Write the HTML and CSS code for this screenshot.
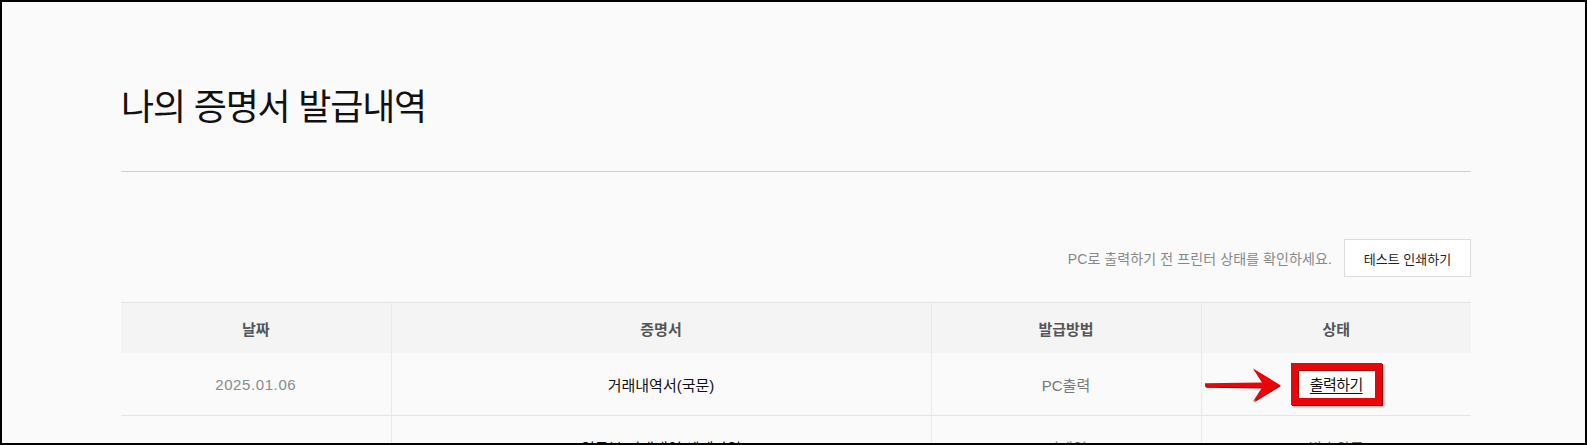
FILE: index.html
```html
<!DOCTYPE html>
<html lang="ko">
<head>
<meta charset="utf-8">
<title>나의 증명서 발급내역</title>
<link rel="stylesheet" href="styles.css">
</head>
<body>
<div class="frame">
  <div class="container">
    <h1 class="title">나의 증명서 발급내역</h1>
    <div class="toolbar">
      <p class="note">PC로 출력하기 전 프린터 상태를 확인하세요.</p>
      <button class="test-btn" type="button">테스트 인쇄하기</button>
    </div>
    <table class="history">
      <colgroup>
        <col class="c-date"><col class="c-cert"><col class="c-method"><col class="c-status">
      </colgroup>
      <thead>
        <tr><th>날짜</th><th>증명서</th><th>발급방법</th><th>상태</th></tr>
      </thead>
      <tbody>
        <tr>
          <td class="date">2025.01.06</td>
          <td class="cert">거래내역서(국문)</td>
          <td class="method">PC출력</td>
          <td class="status">
            <svg class="arrow" width="80" height="36" viewBox="0 0 80 36" aria-hidden="true">
              <path d="M2 16.2 L59 15.6 L50 1.5 L77 18 L50 34.5 L59 20.4 L2 19.8 Z" fill="#a80000" transform="translate(1,1)"/>
              <path d="M2 16.2 L59 15.6 L50 1.5 L77 18 L50 34.5 L59 20.4 L2 19.8 Z" fill="#e8060b"/>
            </svg>
            <a class="print-link" href="#">출력하기</a>
          </td>
        </tr>
        <tr>
          <td class="date">2025.01.03</td>
          <td class="cert">영문본 거래내역 예제파일</td>
          <td class="method">이메일</td>
          <td class="status plain">발송완료</td>
        </tr>
      </tbody>
    </table>
  </div>
</div>
</body>
</html>
```
FILE: styles.css
```css
html, body {
  margin: 0;
  padding: 0;
  background: #fafafa;
}
.frame {
  box-sizing: border-box;
  width: 1587px;
  height: 445px;
  border: 2px solid #000;
  background: #fafafa;
  overflow: hidden;
  font-family: "Liberation Sans", "Noto Sans CJK KR", sans-serif;
}
.container {
  width: 1350px;
  margin-left: 119px;
  padding-top: 84px;
}
.title {
  margin: 0;
  font-family: "Noto Sans CJK KR", sans-serif;
  font-size: 36px;
  line-height: 36px;
  font-weight: 400;
  color: #111;
  letter-spacing: -1.2px;
  padding-bottom: 49px;
  border-bottom: 1px solid #cfcfcf;
}
.toolbar {
  display: flex;
  justify-content: flex-end;
  align-items: center;
  gap: 12px;
  margin-top: 67px;
}
.note {
  margin: 0;
  font-family: "Liberation Sans", "Noto Sans CJK KR", sans-serif;
  font-size: 14px;
  color: #888;
  letter-spacing: 0.1px;
}
.test-btn {
  box-sizing: border-box;
  width: 127px;
  height: 38px;
  background: #fff;
  border: 1px solid #dcdcdc;
  font-family: "Noto Sans CJK KR", sans-serif;
  font-size: 13px;
  color: #222;
  letter-spacing: 0;
  padding: 0;
}
.history {
  width: 100%;
  margin-top: 25px;
  border-collapse: collapse;
  table-layout: fixed;
  border-top: 1px solid #e4e4e4;
}
.c-date, .c-method, .c-status { width: 20%; }
.c-cert { width: 40%; }
.history th {
  height: 50px;
  padding: 0;
  background: #f4f4f4;
  font-family: "Noto Sans CJK KR", sans-serif;
  font-size: 15px;
  font-weight: 700;
  color: #555;
  border-left: 1px solid #e9e9e9;
}
.history td {
  height: 62px;
  padding: 0;
  text-align: center;
  font-size: 15px;
  border-left: 1px solid #e9e9e9;
  border-bottom: 1px solid #e4e4e4;
}
.history th:first-child, .history td:first-child { border-left: none; }
.date {
  color: #8a8a8a;
  letter-spacing: 0.6px;
}
.cert {
  color: #111;
}
.method {
  color: #777;
}
.status {
  position: relative;
}
.plain { color: #666; }
.print-link {
  display: inline-block;
  border: 7px solid #e8060b;
  box-shadow: 1px 1px 0 #8a0000, 2px 2px 2px rgba(0,0,0,0.35), inset 1px 1px 0 #a00000;
  background: #fff;
  padding: 4px 12px 4px;
  color: #111;
  font-family: "Noto Sans CJK KR", sans-serif;
  font-size: 15px;
  line-height: 20px;
  letter-spacing: -0.6px;
  text-decoration: underline;
  text-underline-offset: 3px;
}
.arrow {
  position: absolute;
  left: 1px;
  top: 14px;
}
```
